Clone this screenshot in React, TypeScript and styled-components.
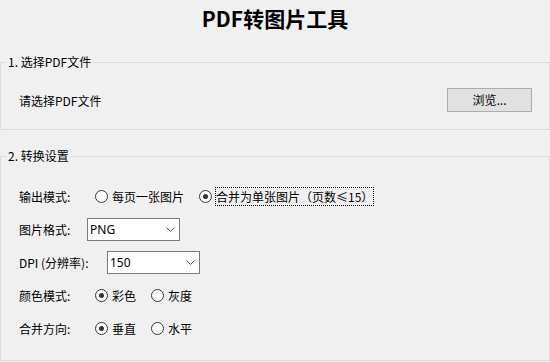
import React from "react";
import styled, { createGlobalStyle } from "styled-components";

const Global = createGlobalStyle`
  html, body { margin: 0; padding: 0; background: #f0f0f0; }
  body {
    font-family: "Noto Sans CJK SC", "Microsoft YaHei", sans-serif;
    font-size: 12px;
    color: #000;
  }
`;

const Window = styled.div`
  width: 550px;
  height: 362px;
  overflow: hidden;
  display: flex;
  flex-direction: column;
  background: #f0f0f0;
`;

const Title = styled.h1`
  margin: 0;
  padding-top: 3px;
  height: 51px;
  line-height: 30px;
  font-size: 21px;
  font-weight: 700;
  text-align: center;
`;

const Group = styled.fieldset<{ $gapTop?: number }>`
  margin: ${(p) => p.$gapTop ?? 0}px 0 0 0;
  padding: 0 5px;
  border: 1px solid #dcdcdc;
  min-width: 0;
  width: 550px;
  box-sizing: border-box;
`;

const Legend = styled.legend`
  padding: 0 2px;
  font-size: 12px;
  line-height: 16px;
`;

const FileBody = styled.div`
  padding: 18px 12px 17px 13px;
  display: flex;
  align-items: center;
  justify-content: space-between;
  height: 24px;
`;

const SettingsBody = styled.div`
  padding: 16px 0 15px 13px;
  display: flex;
  flex-direction: column;
`;

const Row = styled.div`
  height: 33px;
  display: flex;
  align-items: center;
`;

const Label = styled.span<{ $w: number }>`
  width: ${(p) => p.$w}px;
  flex: none;
  line-height: 17px;
  white-space: nowrap;
`;

const Button = styled.button`
  width: 85px;
  height: 24px;
  box-sizing: border-box;
  background: #e1e1e1;
  border: 1px solid #adadad;
  border-radius: 0;
  font-family: inherit;
  font-size: 12px;
  color: #000;
  padding: 0;
  line-height: 20px;
`;

const RadioItem = styled.label`
  display: inline-flex;
  align-items: center;
  margin-right: 14px;
`;

const Circle = styled.span<{ $on?: boolean }>`
  width: 13px;
  height: 13px;
  box-sizing: border-box;
  border-radius: 50%;
  border: 1px solid #333;
  background: #fff;
  margin-right: 3px;
  display: flex;
  align-items: center;
  justify-content: center;
  &::after {
    content: "";
    width: 5px;
    height: 5px;
    border-radius: 50%;
    background: ${(p) => (p.$on ? "#333" : "transparent")};
  }
`;

const RadioText = styled.span<{ $focus?: boolean }>`
  border: 1px dotted ${(p) => (p.$focus ? "#000" : "transparent")};
  line-height: 17px;
  white-space: nowrap;
`;

const Combo = styled.div`
  width: 93px;
  height: 23px;
  box-sizing: border-box;
  background: #fff;
  border: 1px solid #7a7a7a;
  display: flex;
  align-items: center;
  justify-content: space-between;
  padding: 0 4px 0 2px;
  font-family: "Noto Sans", "Noto Sans CJK SC", sans-serif;
  font-size: 12px;
`;

const Chevron = () => (
  <svg width="9" height="5" viewBox="0 0 9 5" style={{ display: "block" }}>
    <path d="M0.5 0.5 L4.5 4.5 L8.5 0.5" fill="none" stroke="#555" strokeWidth="1" />
  </svg>
);

type RadioProps = { text: string; on?: boolean; focus?: boolean };
const Radio = ({ text, on, focus }: RadioProps) => (
  <RadioItem>
    <Circle $on={on} />
    <RadioText $focus={focus}>{text}</RadioText>
  </RadioItem>
);

export default function App() {
  return (
    <Window>
      <Global />
      <Title>PDF转图片工具</Title>
      <Group>
        <Legend>1. 选择PDF文件</Legend>
        <FileBody>
          <Label $w={100}>请选择PDF文件</Label>
          <Button>浏览...</Button>
        </FileBody>
      </Group>
      <Group $gapTop={18}>
        <Legend>2. 转换设置</Legend>
        <SettingsBody>
          <Row>
            <Label $w={76}>输出模式:</Label>
            <Radio text="每页一张图片" />
            <Radio text="合并为单张图片（页数≤15）" on focus />
          </Row>
          <Row>
            <Label $w={68}>图片格式:</Label>
            <Combo>
              <span>PNG</span>
              <Chevron />
            </Combo>
          </Row>
          <Row>
            <Label $w={88}>DPI (分辨率):</Label>
            <Combo>
              <span>150</span>
              <Chevron />
            </Combo>
          </Row>
          <Row>
            <Label $w={76}>颜色模式:</Label>
            <Radio text="彩色" on />
            <Radio text="灰度" />
          </Row>
          <Row>
            <Label $w={76}>合并方向:</Label>
            <Radio text="垂直" on />
            <Radio text="水平" />
          </Row>
        </SettingsBody>
      </Group>
    </Window>
  );
}
